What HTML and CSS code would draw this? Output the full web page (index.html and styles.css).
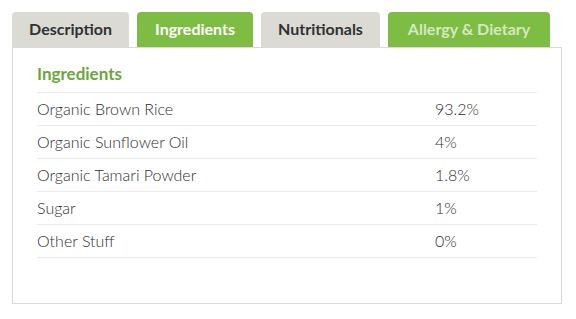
FILE: index.html
```html
<!DOCTYPE html>
<html>
<head>
<meta charset="utf-8">
<link rel="stylesheet" href="styles.css">
</head>
<body>
<div class="wrap">
  <div class="tabs">
    <div class="tab tab-grey tab-desc">Description</div>
    <div class="tab tab-green tab-ing">Ingredients</div>
    <div class="tab tab-grey tab-nut">Nutritionals</div>
    <div class="tab tab-green tab-faded tab-all">Allergy &amp; Dietary</div>
  </div>
  <div class="panel">
    <div class="heading">Ingredients</div>
    <div class="row"><span class="name">Organic Brown Rice</span><span class="pct">93.2%</span></div>
    <div class="row"><span class="name">Organic Sunflower Oil</span><span class="pct">4%</span></div>
    <div class="row"><span class="name">Organic Tamari Powder</span><span class="pct">1.8%</span></div>
    <div class="row"><span class="name">Sugar</span><span class="pct">1%</span></div>
    <div class="row"><span class="name">Other Stuff</span><span class="pct">0%</span></div>
  </div>
</div>
</body>
</html>
```
FILE: styles.css
```css
html, body {
  margin: 0;
  padding: 0;
  background: #ffffff;
}
body {
  font-family: Lato, "Open Sans", sans-serif;
  color: #333333;
}
.wrap {
  padding: 12px 0 0 12px;
  width: 550px;
}
.tabs {
  display: flex;
  gap: 8px;
  height: 35px;
}
.tab {
  box-sizing: border-box;
  height: 35px;
  border-radius: 4px 4px 0 0;
  font-size: 16px;
  font-weight: 700;
  line-height: 33px;
  text-align: center;
}
.tab-grey {
  background: #dbdad3;
  color: #2e3333;
}
.tab-green {
  background: #7dbd43;
  color: #ffffff;
}
.tab-faded {
  color: #d6e8c2;
}
.tab-desc { width: 117px; }
.tab-ing { width: 116px; }
.tab-nut { width: 119px; }
.tab-all { width: 162px; }
.panel {
  box-sizing: border-box;
  border: 1px solid #d9d9d9;
  height: 257px;
  padding: 11px 24px 0 24px;
}
.heading {
  color: #6aa63a;
  font-size: 17px;
  font-weight: 700;
  line-height: 30px;
  height: 33px;
  border-bottom: 1px solid #ebebeb;
}
.row {
  display: flex;
  height: 32px;
  line-height: 32px;
  border-bottom: 1px solid #ebebeb;
  font-size: 16px;
  font-weight: 300;
  color: #2f2f2f;
}
.name {
  flex: none;
  width: 398px;
}
.pct {
  flex: 1;
}
```
